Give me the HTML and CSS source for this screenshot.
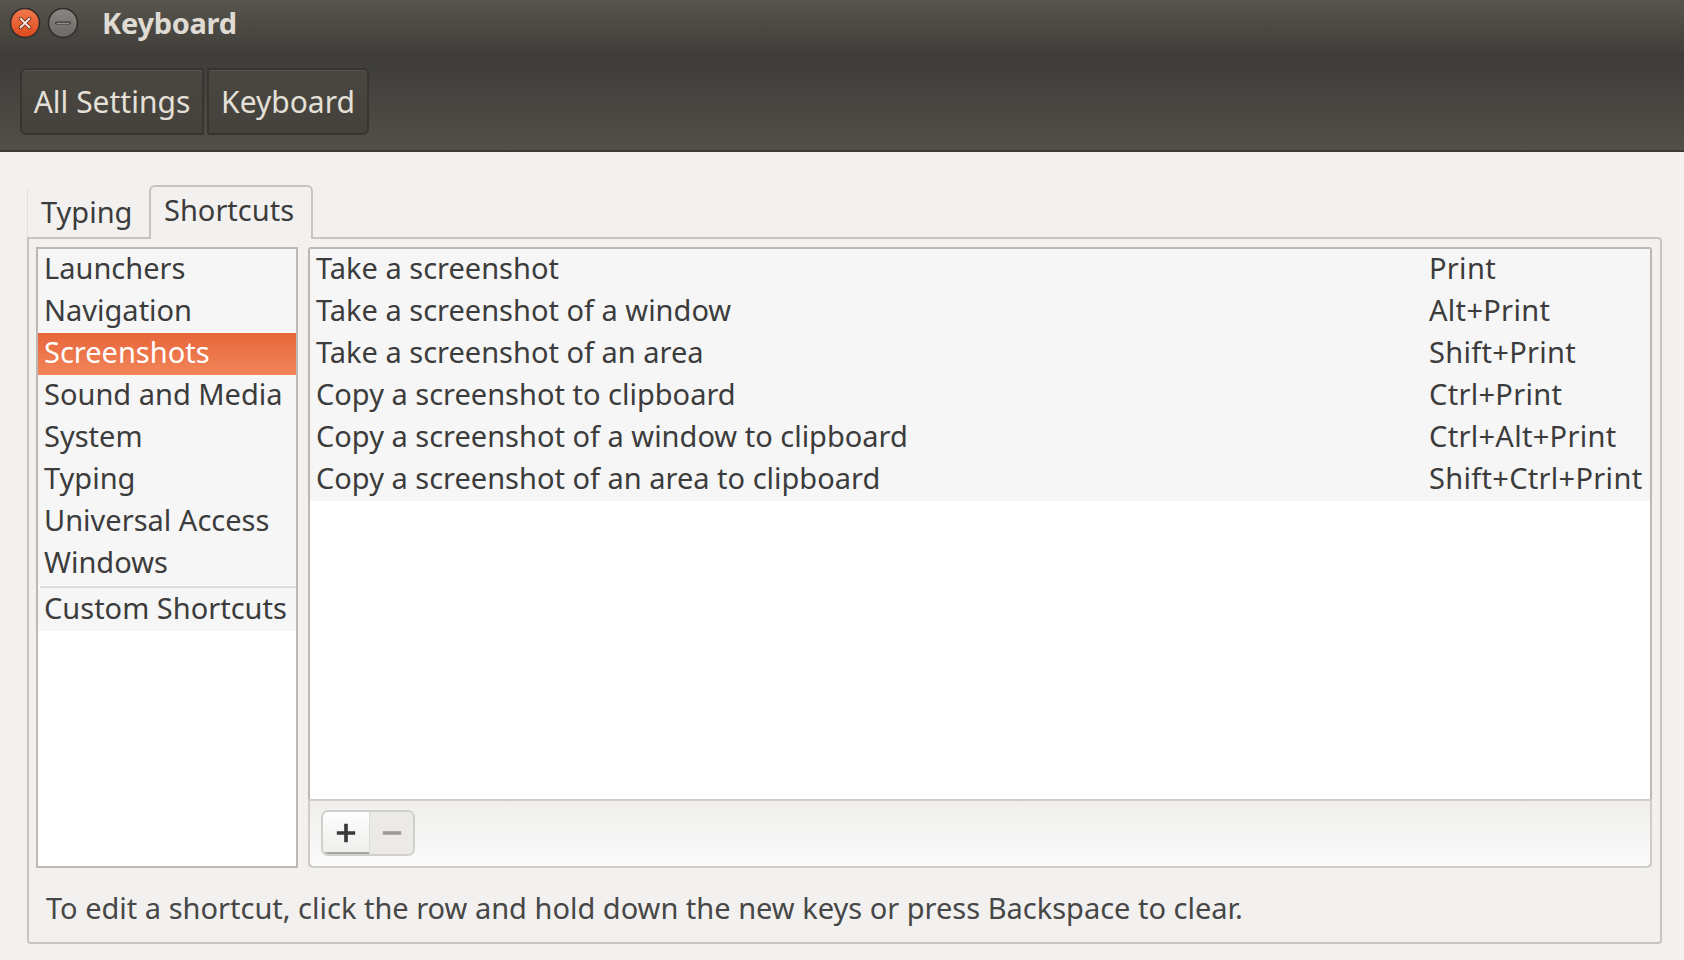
FILE: index.html
```html
<!DOCTYPE html>
<html lang="en">
<head>
<meta charset="utf-8">
<title>Keyboard</title>
<link rel="stylesheet" href="styles.css">
</head>
<body>
<div class="window">
  <header class="titlebar">
    <div class="wm-buttons">
      <span class="wm wm-close">
        <svg width="32" height="32" viewBox="0 0 32 32">
          <defs>
            <linearGradient id="gc" x1="0" y1="0" x2="0" y2="1">
              <stop offset="0" stop-color="#f37a4e"/>
              <stop offset="1" stop-color="#dc4a1c"/>
            </linearGradient>
          </defs>
          <circle cx="16" cy="16" r="14.5" fill="url(#gc)" stroke="#2f2d2a" stroke-width="1.6"/>
          <path d="M11.5 11.5 L20.5 20.5 M20.5 11.5 L11.5 20.5" stroke="#5a2414" stroke-width="3.4" stroke-linecap="round"/>
          <path d="M11.5 11.5 L20.5 20.5 M20.5 11.5 L11.5 20.5" stroke="#fbe9e2" stroke-width="1.8" stroke-linecap="round"/>
        </svg>
      </span>
      <span class="wm wm-min">
        <svg width="32" height="32" viewBox="0 0 32 32">
          <defs>
            <linearGradient id="gm" x1="0" y1="0" x2="0" y2="1">
              <stop offset="0" stop-color="#8a8782"/>
              <stop offset="1" stop-color="#6b6964"/>
            </linearGradient>
          </defs>
          <circle cx="16" cy="16" r="14.5" fill="url(#gm)" stroke="#2f2d2a" stroke-width="1.6"/>
          <path d="M9.5 16 H22.5" stroke="#3c3a36" stroke-width="3" stroke-linecap="round"/>
          <path d="M10 16.3 H22" stroke="#a9a6a0" stroke-width="1" stroke-linecap="round"/>
        </svg>
      </span>
    </div>
    <div class="title">Keyboard</div>
  </header>

  <nav class="toolbar">
    <div class="crumbs">
      <button class="crumb crumb-first">All Settings</button>
      <button class="crumb crumb-last">Keyboard</button>
    </div>
  </nav>

  <main class="content">
    <div class="tabs">
      <div class="tab">Typing</div>
      <div class="tab tab-active">Shortcuts</div>
    </div>
    <section class="notebook">
      <div class="panes">
        <ul class="sections">
          <li class="section">Launchers</li>
          <li class="section">Navigation</li>
          <li class="section section-selected">Screenshots</li>
          <li class="section">Sound and Media</li>
          <li class="section">System</li>
          <li class="section">Typing</li>
          <li class="section">Universal Access</li>
          <li class="section">Windows</li>
          <li class="section-sep"></li>
          <li class="section">Custom Shortcuts</li>
        </ul>
        <div class="shortcuts">
          <div class="shortcut-list">
            <div class="row"><span class="name">Take a screenshot</span><span class="accel">Print</span></div>
            <div class="row"><span class="name">Take a screenshot of a window</span><span class="accel">Alt+Print</span></div>
            <div class="row"><span class="name">Take a screenshot of an area</span><span class="accel">Shift+Print</span></div>
            <div class="row"><span class="name">Copy a screenshot to clipboard</span><span class="accel">Ctrl+Print</span></div>
            <div class="row"><span class="name">Copy a screenshot of a window to clipboard</span><span class="accel">Ctrl+Alt+Print</span></div>
            <div class="row"><span class="name">Copy a screenshot of an area to clipboard</span><span class="accel">Shift+Ctrl+Print</span></div>
          </div>
          <div class="list-toolbar">
            <div class="linked">
              <button class="tb tb-add" aria-label="Add">
                <svg width="24" height="24" viewBox="0 0 24 24"><path d="M12 2 V22 M2 12 H22" stroke="#3a3a3a" stroke-width="4"/></svg>
              </button>
              <button class="tb tb-remove" aria-label="Remove">
                <svg width="24" height="24" viewBox="0 0 24 24"><path d="M2 12 H22" stroke="#9b9893" stroke-width="4"/></svg>
              </button>
            </div>
          </div>
        </div>
      </div>
      <p class="hint">To edit a shortcut, click the row and hold down the new keys or press Backspace to clear.</p>
    </section>
  </main>
</div>
</body>
</html>
```

FILE: styles.css
```css
* { box-sizing: border-box; }

html, body {
  margin: 0;
  padding: 0;
  width: 1684px;
  height: 960px;
  overflow: hidden;
  background: #f2f1f0;
  font-family: "Noto Sans", "Open Sans", sans-serif;
  color: #3c3c3c;
}

.window {
  display: flex;
  flex-direction: column;
  height: 960px;
}

/* ---------- title bar ---------- */
.titlebar {
  height: 52px;
  display: flex;
  align-items: center;
  background: linear-gradient(#58544d, #413f3b);
  padding-left: 9px;
}

.wm-buttons {
  display: flex;
  gap: 6px;
  margin-top: -6px;
}

.wm {
  display: block;
  width: 32px;
  height: 32px;
}

.wm svg { display: block; }

.title {
  margin-left: 23px;
  margin-top: -7px;
  font-weight: 700;
  font-size: 29px;
  color: #dfdbd2;
  letter-spacing: -0.3px;
}

/* ---------- toolbar ---------- */
.toolbar {
  height: 100px;
  background: linear-gradient(#3d3c38, #4c4944 70%, #534f49);
  border-bottom: 2px solid #3b3a36;
  padding: 16px 0 0 20px;
}

.crumbs {
  display: flex;
  gap: 3px;
}

.crumb {
  height: 67px;
  font-family: inherit;
  font-size: 30px;
  color: #e4e0d8;
  white-space: nowrap;
  background: linear-gradient(#4a4741, #45423d);
  border: 2px solid #37352f;
  box-shadow: inset 0 1px 0 rgba(255,255,255,0.06);
  padding: 0;
  margin: 0;
  text-align: center;
}

.crumb-first {
  width: 184px;
  border-radius: 6px 2px 2px 6px;
}

.crumb-last {
  width: 162px;
  border-radius: 2px 6px 6px 2px;
}

/* ---------- content ---------- */
.content {
  flex: 1;
  padding: 33px 22px 0 27px;
}

.tabs {
  display: flex;
  align-items: flex-end;
  height: 52px;
}

.tab {
  font-size: 29px;
  color: #3c3c3c;
  height: 49px;
  width: 122px;
  padding-left: 13px;
  line-height: 48px;
  border-left: 1px solid #e2e0dd;
}

.tab-active {
  position: relative;
  z-index: 1;
  width: 164px;
  height: 54px;
  margin-bottom: -2px;
  padding-left: 13px;
  line-height: 46px;
  background: #f2f1f0;
  border: 2px solid #c8c5c1;
  border-bottom: none;
  border-radius: 6px 6px 0 0;
}

.notebook {
  height: 707px;
  border: 2px solid #c8c5c1;
  border-radius: 0 4px 4px 4px;
  padding: 8px 8px 0 7px;
  display: flex;
  flex-direction: column;
}

.panes {
  display: flex;
  gap: 10px;
  height: 621px;
}

/* left list */
.sections {
  list-style: none;
  margin: 0;
  padding: 0;
  width: 262px;
  height: 100%;
  border: 2px solid #bcb8b3;
  background: #ffffff;
}

.section {
  height: 42px;
  line-height: 38px;
  padding-left: 6px;
  font-size: 29px;
  background: #f6f6f6;
  white-space: nowrap;
}

.section-selected {
  background: linear-gradient(#e8653a, #f2855a);
  color: #ffffff;
}

.section-sep {
  height: 3px;
  background: #f6f6f6;
  border-top: 2px solid #dedcd9;
  margin-top: 1px;
  margin-left: 2px;
}

/* right panel */
.shortcuts {
  flex: 1;
  display: flex;
  flex-direction: column;
  border: 2px solid #bcb8b3;
  border-bottom: none;
  border-radius: 3px 3px 5px 5px;
  background: #ffffff;
}

.shortcut-list {
  flex: 1;
  background: #ffffff;
}

.row {
  display: flex;
  height: 42px;
  line-height: 38px;
  background: #f6f6f6;
  font-size: 29px;
  white-space: nowrap;
}

.name {
  flex: 1;
  padding-left: 6px;
}

.accel {
  width: 221px;
  letter-spacing: 0.3px;
}

.list-toolbar {
  height: 69px;
  margin: 0 -2px;
  border: 2px solid #d0cdc9;
  border-radius: 0 0 6px 6px;
  background: linear-gradient(#efeeec, #fbfbfb);
  padding: 9px 0 0 11px;
}

.linked {
  display: flex;
  width: 94px;
  height: 46px;
  border: 2px solid #d1cfcb;
  border-radius: 7px;
  overflow: hidden;
}

.tb {
  width: 46px;
  height: 42px;
  margin: 0;
  padding: 0;
  border: none;
  display: flex;
  align-items: center;
  justify-content: center;
}

.tb svg { display: block; }

.tb-add {
  background: linear-gradient(#fdfdfd, #efeeec);
  box-shadow: inset 0 -2px 0 #a9a7a3;
}

.tb-remove {
  flex: 1;
  background: #ebeae8;
  border-left: 1px solid #dedcd9;
}

.tb-add svg, .tb-remove svg { width: 22px; height: 22px; }

.hint {
  margin: 0;
  flex: 1;
  display: flex;
  align-items: center;
  padding: 4px 0 0 10px;
  font-size: 29px;
  color: #474747;
}
```
